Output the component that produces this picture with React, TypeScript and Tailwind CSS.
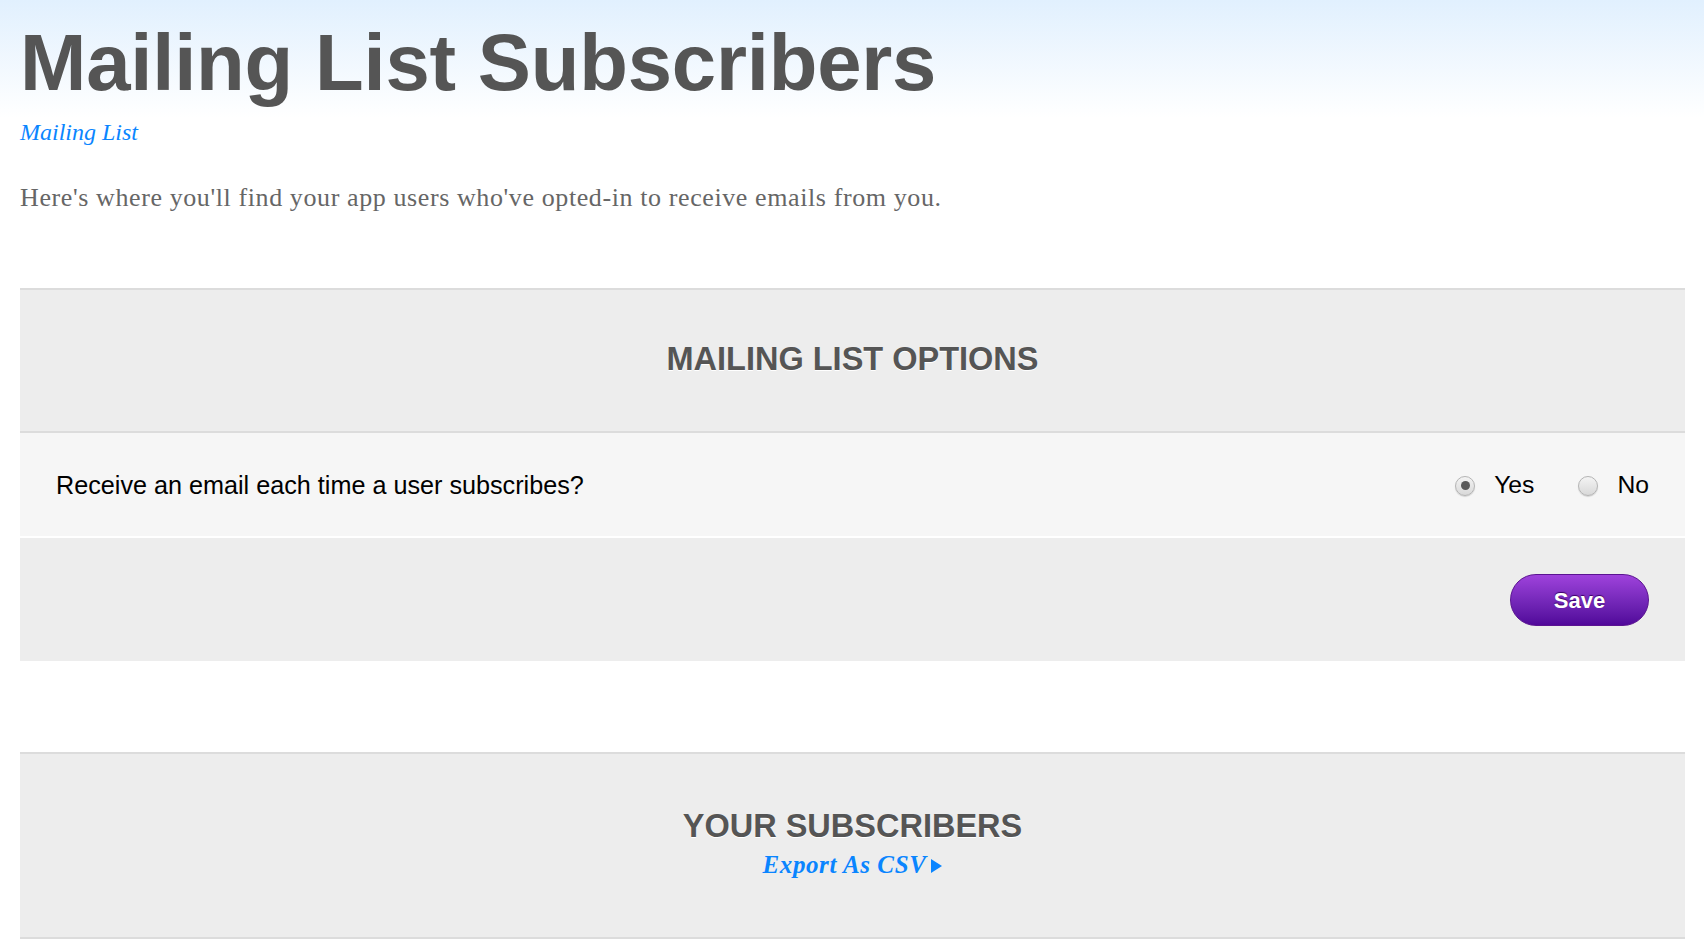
const sans = 'font-["Liberation_Sans",Arial,Helvetica,sans-serif]'
const serif = 'font-["Liberation_Serif","Times_New_Roman",serif]'

function Radio({ checked, label }: { checked?: boolean; label: string }) {
  return (
    <label className="flex items-center gap-[19px]">
      <span className="flex h-[20px] w-[20px] items-center justify-center rounded-full border border-[#b4b4b4] bg-linear-to-b from-[#f4f4f4] to-[#d9d9d9] shadow-[0_1px_1px_rgba(0,0,0,0.15)]">
        {checked && <span className="h-[9px] w-[9px] rounded-full bg-[#5a5a5a]" />}
      </span>
      <span className="text-[24.7px] leading-none text-black">{label}</span>
    </label>
  )
}

export default function App() {
  return (
    <div className={`min-h-screen bg-[linear-gradient(#e1f0fe,#ffffff_118px)] pl-[20px] pr-[19px] pb-[2px] ${sans}`}>
      <h1 className="pt-[23px] text-[79.7px] leading-none font-bold tracking-[-0.2px] text-[#555555]">
        Mailing List Subscribers
      </h1>
      <a className={`mt-[15px] block text-[24px] leading-[28px] italic text-[#0a85ff] ${serif}`} href="#">
        Mailing List
      </a>
      <p className={`mt-[36px] text-[26px] leading-[32px] tracking-[0.6px] text-[#666666] ${serif}`}>
        Here's where you'll find your app users who've opted-in to receive emails from you.
      </p>

      <section className="mt-[74px] border-t-2 border-[#dcdcdc]">
        <div className="flex h-[143px] items-center justify-center border-b-2 border-[#dcdcdc] bg-[#ededed]">
          <h2 className="pb-[2px] text-[32.5px] font-bold text-[#555555] [text-shadow:0_1px_0_#ffffff]">
            MAILING LIST OPTIONS
          </h2>
        </div>
        <div className="flex h-[105px] items-center justify-between border-b-2 border-white bg-[#f6f6f6] px-9 pt-[3px]">
          <span className="text-[25.2px] text-black">Receive an email each time a user subscribes?</span>
          <div className="flex items-center gap-[44px]">
            <Radio checked label="Yes" />
            <Radio label="No" />
          </div>
        </div>
        <div className="flex h-[123px] items-center justify-end bg-[#ededed] px-9 pt-[2px]">
          <button
            type="button"
            className="h-[52px] w-[139px] rounded-full border border-[#5b1491] bg-linear-to-b from-[#9f42dc] to-[#51079a] text-[22px] font-bold text-white [text-shadow:0_-1px_1px_#3a0066]"
          >
            Save
          </button>
        </div>
      </section>

      <section className="mt-[91px] flex h-[187px] flex-col items-center justify-center border-y-2 border-[#dcdcdc] bg-[#ededed] pb-[3px]">
        <h2 className="text-[32.5px] leading-[36px] font-bold text-[#555555] [text-shadow:0_1px_0_#ffffff]">
          YOUR SUBSCRIBERS
        </h2>
        <a className={`mt-[7px] flex items-center gap-[5px] text-[25px] leading-[28px] font-bold italic tracking-[0.6px] text-[#0a85ff] ${serif}`} href="#">
          Export As CSV
          <svg width="11" height="14" viewBox="0 0 11 14" className="mt-[1px]">
            <path d="M0 0 L11 7 L0 14 Z" fill="#0a85ff" />
          </svg>
        </a>
      </section>
    </div>
  )
}
